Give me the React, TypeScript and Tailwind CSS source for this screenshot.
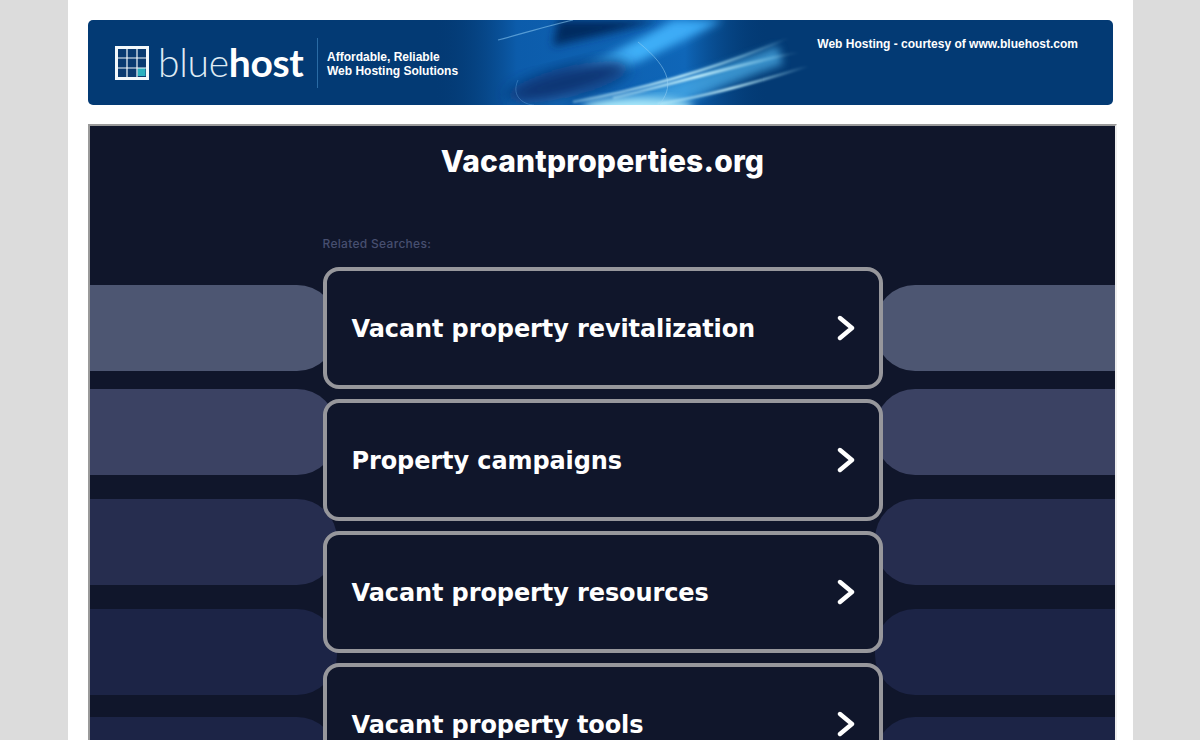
const cards = [
  "Vacant property revitalization",
  "Property campaigns",
  "Vacant property resources",
  "Vacant property tools",
];

const pills = [
  { color: "bg-[#4d5672]", space: "mt-[159px]" },
  { color: "bg-[#3b4263]", space: "mt-[18px]" },
  { color: "bg-[#262d4f]", space: "mt-[24px]" },
  { color: "bg-[#1c2446]", space: "mt-[24px]" },
  { color: "bg-[#1c2446]", space: "mt-[22px]" },
];

function Swoosh() {
  return (
    <svg className="absolute left-[345px] top-0 h-[85px] w-[420px]" viewBox="0 0 420 85">
      <defs>
        <linearGradient id="fade" x1="0" x2="1" y1="0" y2="0">
          <stop offset="0" stopColor="#033a74" stopOpacity="0" />
          <stop offset="0.2" stopColor="#0c5cab" />
          <stop offset="0.6" stopColor="#0f66b8" />
          <stop offset="0.8" stopColor="#033a74" stopOpacity="0" />
        </linearGradient>
        <linearGradient id="beam" x1="0" x2="1" y1="1" y2="0">
          <stop offset="0" stopColor="#2f93e6" stopOpacity="0.3" />
          <stop offset="0.6" stopColor="#3fb0f8" />
          <stop offset="1" stopColor="#3aa8f5" />
        </linearGradient>
        <linearGradient id="ray" x1="0" x2="1" y1="1" y2="0">
          <stop offset="0" stopColor="#c5f1fd" stopOpacity="0.4" />
          <stop offset="0.45" stopColor="#c5f1fd" />
          <stop offset="1" stopColor="#a8e6fb" stopOpacity="0" />
        </linearGradient>
        <filter id="b1" x="-30%" y="-30%" width="160%" height="160%"><feGaussianBlur stdDeviation="4" /></filter>
        <filter id="b2" x="-30%" y="-30%" width="160%" height="160%"><feGaussianBlur stdDeviation="1.2" /></filter>
        <filter id="b3" x="-30%" y="-30%" width="160%" height="160%"><feGaussianBlur stdDeviation="7" /></filter>
      </defs>
      <rect width="420" height="85" fill="url(#fade)" />
      <path d="M70 85 C130 55 200 25 240 0 L290 0 C240 28 170 55 125 85 Z" fill="url(#beam)" filter="url(#b1)" />
      <path d="M125 0 L225 0 C200 8 165 16 120 26 Z" fill="#052a60" filter="url(#b1)" />
      <ellipse cx="135" cy="62" rx="62" ry="15" transform="rotate(-14 135 62)" fill="#0a3475" filter="url(#b3)" />
      <path d="M165 85 C225 68 290 46 345 26 L350 44 C300 62 265 76 245 85 Z" fill="#4fb4ee" opacity="0.7" filter="url(#b1)" />
      <ellipse cx="205" cy="87" rx="55" ry="9" fill="#a9e8fa" filter="url(#b1)" />
      <path d="M140 82 C215 68 285 48 355 18" stroke="url(#ray)" strokeWidth="2.5" fill="none" filter="url(#b2)" />
      <path d="M180 78 C240 64 300 46 365 32" stroke="url(#ray)" strokeWidth="3" fill="none" filter="url(#b2)" />
      <path d="M225 84 C275 76 325 62 375 46" stroke="url(#ray)" strokeWidth="2.5" fill="none" filter="url(#b2)" />
      <path d="M65 20 C95 12 115 6 140 0" stroke="#8fcdf5" strokeOpacity="0.55" strokeWidth="1.2" fill="none" />
      <path d="M205 22 C240 50 240 68 226 85" stroke="#9fd5f5" strokeOpacity="0.5" strokeWidth="1" fill="none" />
      <path d="M85 60 C77 78 93 85 101 85" stroke="#6fb2e8" strokeOpacity="0.35" strokeWidth="1" fill="none" />
    </svg>
  );
}

function Logo() {
  return (
    <svg className="h-[34px] w-[34px] shrink-0" viewBox="0 0 34 34">
      <rect x="1.5" y="1.5" width="31" height="31" fill="#0a3a70" stroke="#f4f8fb" strokeWidth="3" />
      <rect x="22.5" y="22" width="8" height="8" fill="#2bb0bf" />
      <path d="M12 3v28M22 3v28M3 12h28M3 22h28" stroke="#f4f8fb" strokeWidth="1.2" />
    </svg>
  );
}

function Chevron() {
  return (
    <svg className="h-[26px] w-[18px] shrink-0" viewBox="0 0 18 26" fill="none">
      <path d="M3 3l12 10L3 23" stroke="#ffffff" strokeWidth="4.4" strokeLinecap="round" strokeLinejoin="round" />
    </svg>
  );
}

function PillColumn({ side }: { side: "left" | "right" }) {
  const wrap =
    side === "left"
      ? "absolute left-0 top-0 flex w-[247px] flex-col"
      : "absolute right-0 top-0 flex w-[240px] flex-col";
  const round = side === "left" ? "rounded-r-[40px]" : "rounded-l-[40px]";
  return (
    <div className={wrap}>
      {pills.map((p, i) => (
        <div key={i} className={`h-[86px] shrink-0 ${p.color} ${p.space} ${round}`} />
      ))}
    </div>
  );
}

export default function App() {
  return (
    <div className="h-[740px] overflow-hidden bg-[#dcdcdc]">
      <div className="mx-[68px] h-full w-[1065px] bg-white px-5 pt-5">
        <header className="relative flex h-[85px] w-[1025px] items-center overflow-hidden rounded-[5px] bg-[#033a74] font-['Liberation_Sans',sans-serif]">
          <Swoosh />
          <div className="relative ml-[27px] flex items-center">
            <Logo />
            <div className="ml-[9px] w-[150px] text-[39px] leading-none tracking-[-0.3px] text-[#dfeaf3] font-['Lato',sans-serif]">
              <span className="font-light">blue</span>
              <span className="font-bold text-white">host</span>
            </div>
            <div className="ml-[9px] h-[50px] w-px bg-[#2a6ba5]" />
            <div className="ml-[9px] pt-[3px] text-[12px] font-bold leading-[14px] text-white">
              <div>Affordable, Reliable</div>
              <div>Web Hosting Solutions</div>
            </div>
          </div>
          <div className="absolute right-[35px] top-[16px] text-[12px] font-bold leading-[16px] text-white">
            Web Hosting - courtesy of www.bluehost.com
          </div>
        </header>

        <div className="mt-[19px] h-[700px] w-[1029px] border-2 border-b-0 border-t-[#9a9a9a] border-l-[#9a9a9a] border-r-[#eeeeee]">
          <main className="relative h-full overflow-hidden bg-[#10162b]">
            <PillColumn side="left" />
            <PillColumn side="right" />
            <div className="relative flex flex-col items-center">
              <h1 className="mt-[15px] h-[40px] text-[30px] font-extrabold leading-[40px] tracking-[0.15px] text-white font-['Inter',sans-serif]">
                Vacantproperties.org
              </h1>
              <div className="mt-[55px] flex w-[560px] flex-col">
                <p className="text-[12px] font-medium leading-[16px] tracking-[0.3px] text-[#474f70] font-['Inter',sans-serif]">
                  Related Searches:
                </p>
                <div className="mt-[15px] flex flex-col gap-[10px]">
                  {cards.map((c) => (
                    <div
                      key={c}
                      className="flex h-[122px] items-center justify-between rounded-[16px] border-4 border-[#97979c] bg-[#10162b] pl-[25px] pr-[24px]"
                    >
                      <span className="translate-y-px text-[24px] font-bold tracking-[-0.1px] text-white font-['DejaVu_Sans',sans-serif]">{c}</span>
                      <Chevron />
                    </div>
                  ))}
                </div>
              </div>
            </div>
          </main>
        </div>
      </div>
    </div>
  );
}
